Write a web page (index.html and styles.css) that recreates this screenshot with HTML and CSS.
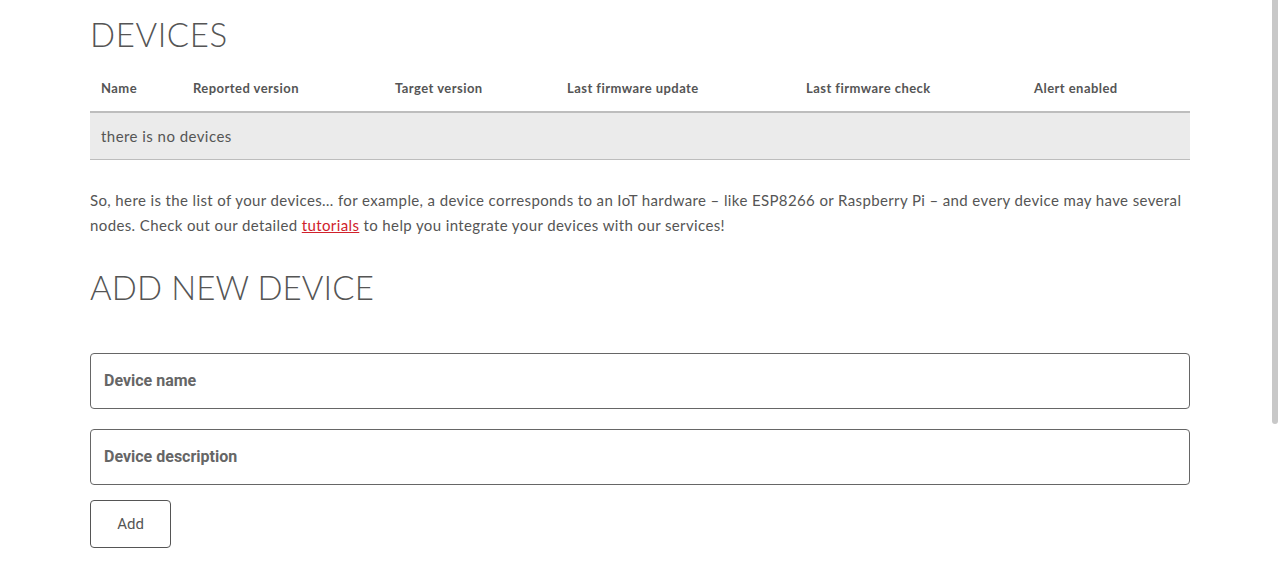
FILE: index.html
```html
<!DOCTYPE html>
<html>
<head>
<meta charset="utf-8">
<link rel="stylesheet" href="styles.css">
</head>
<body>
<main class="page">
  <h1 class="title title-devices">DEVICES</h1>
  <table class="devices">
    <thead>
      <tr>
        <th class="c-name">Name</th>
        <th class="c-rep">Reported version</th>
        <th class="c-tgt">Target version</th>
        <th class="c-upd">Last firmware update</th>
        <th class="c-chk">Last firmware check</th>
        <th class="c-alert">Alert enabled</th>
      </tr>
    </thead>
    <tbody>
      <tr class="empty"><td colspan="6">there is no devices</td></tr>
    </tbody>
  </table>
  <p class="intro">So, here is the list of your devices… for example, a device corresponds to an IoT hardware – like ESP8266 or Raspberry Pi – and every device may have several nodes. Check out our detailed <a href="#">tutorials</a> to help you integrate your devices with our services!</p>
  <h2 class="title title-add">ADD NEW DEVICE</h2>
  <form class="add-form">
    <input class="field" type="text" placeholder="Device name">
    <input class="field" type="text" placeholder="Device description">
    <button class="btn" type="button">Add</button>
  </form>
</main>
<div class="scroll-thumb"></div>
</body>
</html>
```
FILE: styles.css
```css
html, body {
  margin: 0;
  padding: 0;
  background: #fff;
}
body {
  font-family: Lato, "Open Sans", sans-serif;
  color: #555;
  overflow: hidden;
}
.page {
  width: 1100px;
  margin-left: 90px;
  display: flex;
  flex-direction: column;
}
.title {
  font-family: Lato, sans-serif;
  font-weight: 300;
  font-size: 33px;
  letter-spacing: 0.6px;
  color: #555;
  margin: 0;
  line-height: 40px;
}
.title-devices {
  margin-top: 14px;
}
.title-add {
  margin-top: 29px;
  letter-spacing: 0.1px;
}
.devices {
  margin-top: 10px;
  border-collapse: collapse;
  width: 1100px;
  table-layout: fixed;
}
.devices th {
  text-align: left;
  font-size: 13px;
  font-weight: 700;
  letter-spacing: 0.45px;
  color: #555;
  padding: 0 0 0 11px;
  height: 48px;
  border-bottom: 2px solid #bdbdbd;
  vertical-align: middle;
  box-sizing: border-box;
}
.c-name { width: 92px; }
.c-rep { width: 202px; }
.c-tgt { width: 172px; }
.c-upd { width: 239px; }
.c-chk { width: 228px; }
.c-alert { width: 167px; }
.devices td {
  background: #ebebeb;
  font-size: 15px;
  letter-spacing: 0.45px;
  padding: 0 0 0 11px;
  height: 47px;
  border-bottom: 1px solid #bdbdbd;
  box-sizing: border-box;
}
.intro {
  margin: 28px 0 0 0;
  font-size: 15px;
  line-height: 25px;
  letter-spacing: 0.38px;
  color: #555;
}
.intro a {
  color: #d0212b;
  text-decoration: underline;
}
.add-form {
  display: flex;
  flex-direction: column;
  align-items: flex-start;
  gap: 20px;
  margin-top: 46px;
}
.field {
  width: 1100px;
  height: 56px;
  box-sizing: border-box;
  border: 1px solid #666;
  border-radius: 4px;
  padding: 0 13px;
  font-family: Roboto, sans-serif;
  font-size: 16px;
  font-weight: 700;
  color: #666;
  outline: none;
}
.field::placeholder {
  color: #666;
  opacity: 1;
}
.add-form .field + .field + .btn {
  margin-top: -5px;
}
.btn {
  width: 81px;
  height: 48px;
  box-sizing: border-box;
  border: 1px solid #555;
  border-radius: 4px;
  background: #fff;
  font-family: Roboto, sans-serif;
  font-size: 15px;
  font-weight: 400;
  color: #555;
}
.scroll-thumb {
  position: absolute;
  right: 2px;
  top: 0;
  width: 6px;
  height: 424px;
  background: #c8c8c8;
  border-radius: 0 0 3px 3px;
}
```
